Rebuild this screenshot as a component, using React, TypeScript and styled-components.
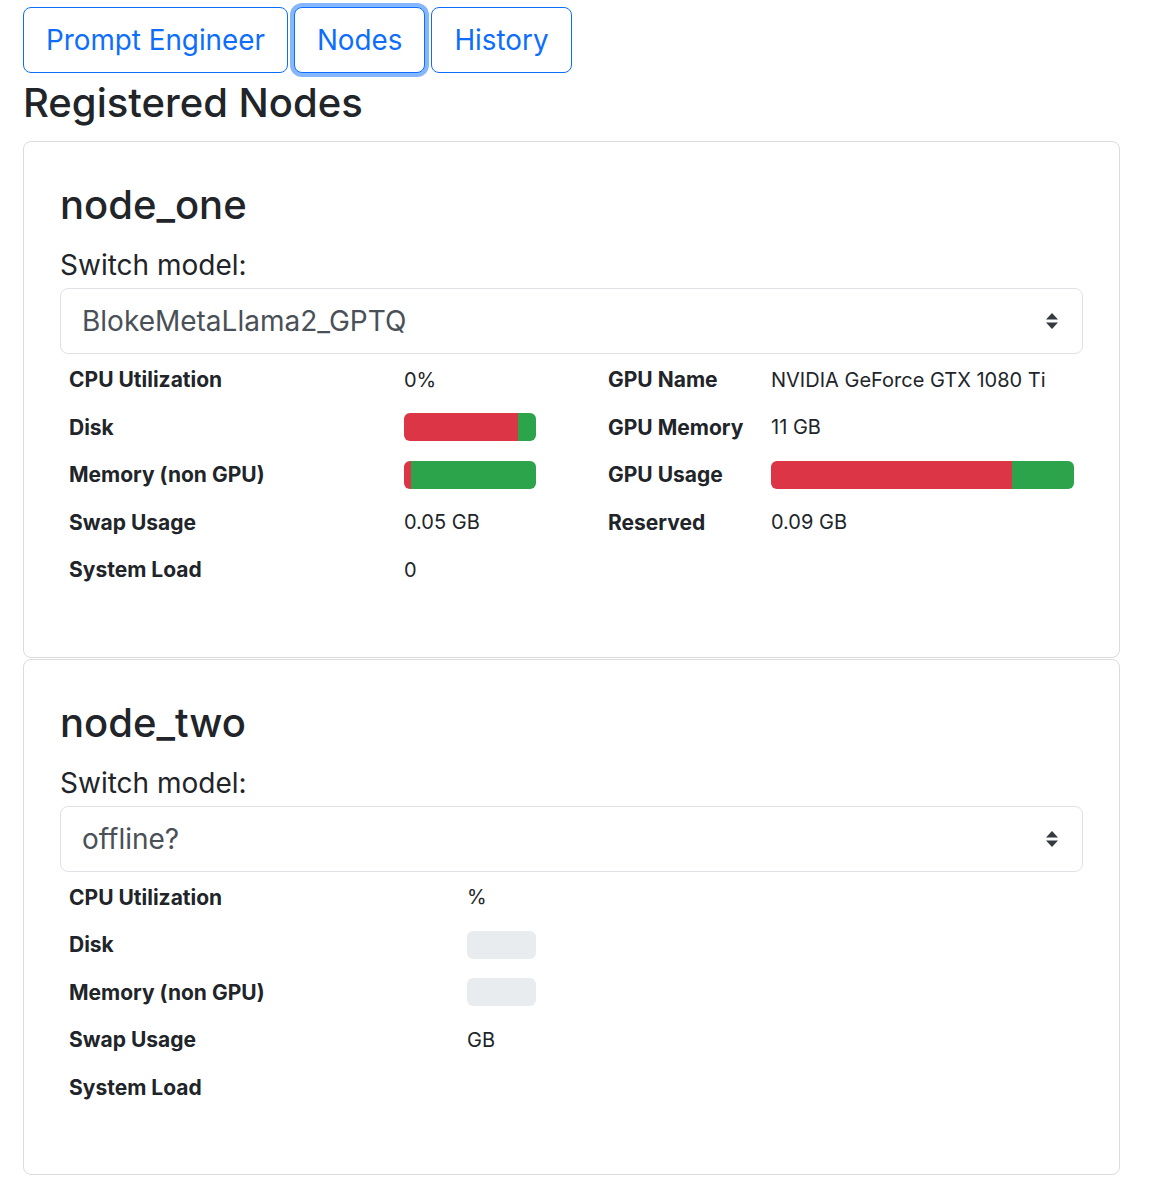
import React from 'react'
import styled, { createGlobalStyle } from 'styled-components'

const GlobalStyle = createGlobalStyle`
  body {
    margin: 0;
    background: #fff;
    font-family: Inter, 'Liberation Sans', Arial, sans-serif;
    color: #212529;
  }
`

type Bar = { used: number }
type Row = { label: string; value?: string; bar?: Bar | null }

type Node = {
  name: string
  model: string
  columns: string
  left: Row[]
  right: Row[]
}

const nodes: Node[] = [
  {
    name: 'node_one',
    model: 'BlokeMetaLlama2_GPTQ',
    columns: '335px 150px 54px 163px 1fr',
    left: [
      { label: 'CPU Utilization', value: '0%' },
      { label: 'Disk', bar: { used: 86 } },
      { label: 'Memory (non GPU)', bar: { used: 5 } },
      { label: 'Swap Usage', value: '0.05 GB' },
      { label: 'System Load', value: '0' },
    ],
    right: [
      { label: 'GPU Name', value: 'NVIDIA GeForce GTX 1080 Ti' },
      { label: 'GPU Memory', value: '11 GB' },
      { label: 'GPU Usage', bar: { used: 79.5 } },
      { label: 'Reserved', value: '0.09 GB' },
    ],
  },
  {
    name: 'node_two',
    model: 'offline?',
    columns: '398px 87px 1fr',
    left: [
      { label: 'CPU Utilization', value: '%' },
      { label: 'Disk', bar: null },
      { label: 'Memory (non GPU)', bar: null },
      { label: 'Swap Usage', value: 'GB' },
      { label: 'System Load', value: '' },
    ],
    right: [],
  },
]

const tabs = ['Prompt Engineer', 'Nodes', 'History']

const SelectArrows = () => (
  <svg width='14' height='18' viewBox='0 0 14 18'>
    <path d='M7 1 L13 7.5 H1 Z' fill='#343a40' />
    <path d='M7 17 L13 10.5 H1 Z' fill='#343a40' />
  </svg>
)

const Cell = ({ row, label }: { row?: Row; label?: boolean }) => {
  if (!row) return <Td />
  if (label) return <Th>{row.label}</Th>
  if (row.bar !== undefined) {
    return (
      <Td>
        <Progress>
          {row.bar && (
            <>
              <Fill $color='#dc3545' style={{ width: `${row.bar.used}%` }} />
              <Fill $color='#2ba44b' style={{ flex: 1 }} />
            </>
          )}
        </Progress>
      </Td>
    )
  }
  return <Td>{row.value}</Td>
}

const NodeCard = ({ node }: { node: Node }) => (
  <Card>
    <NodeName>{node.name}</NodeName>
    <Label>Switch model:</Label>
    <Select>
      <span>{node.model}</span>
      <SelectArrows />
    </Select>
    <Table $columns={node.columns}>
      {node.left.map((row, i) => (
        <React.Fragment key={row.label}>
          <Cell row={row} label />
          <Cell row={row} />
          <Td />
          {node.right.length > 0 && (
            <>
              <Cell row={node.right[i]} label />
              <Cell row={node.right[i]} />
            </>
          )}
        </React.Fragment>
      ))}
    </Table>
  </Card>
)

const App = () => {
  return (
    <Page>
      <GlobalStyle />
      <Tabs>
        {tabs.map((t) => (
          <TabButton key={t} $active={t === 'Nodes'}>
            {t}
          </TabButton>
        ))}
      </Tabs>
      <Title>Registered Nodes</Title>
      <Cards>
        {nodes.map((n) => (
          <NodeCard key={n.name} node={n} />
        ))}
      </Cards>
    </Page>
  )
}

export default App

const Page = styled.div`
  padding: 7px 48px 26px 23px;
`
const Tabs = styled.div`
  display: flex;
  gap: 6px;
`
const TabButton = styled.button<{ $active?: boolean }>`
  height: 66px;
  padding: 0 22px;
  font-family: inherit;
  font-size: 27.8px;
  color: #0d6efd;
  background: #fff;
  border: 1px solid #0d6efd;
  border-radius: 8px;
  box-shadow: ${(p) => (p.$active ? '0 0 0 4px #86b7fe' : 'none')};
`
const Title = styled.h1`
  margin: 6px 0 14px;
  font-size: 40px;
  font-weight: 500;
  line-height: 48px;
`
const Cards = styled.div`
  display: flex;
  flex-direction: column;
  gap: 1px;
`
const Card = styled.div`
  border: 1px solid #dcdcdc;
  border-radius: 8px;
  padding: 39px 36px 36px;
`
const NodeName = styled.h2`
  margin: 0 0 15px;
  font-size: 40px;
  font-weight: 500;
  line-height: 48px;
`
const Label = styled.div`
  font-size: 28px;
  line-height: 42px;
  margin-bottom: 2px;
`
const Select = styled.div`
  height: 66px;
  box-sizing: border-box;
  border: 1px solid #dee2e6;
  border-radius: 8px;
  padding: 0 23px 0 21px;
  display: flex;
  align-items: center;
  justify-content: space-between;
  font-size: 28px;
  color: #495057;
`
const Table = styled.div<{ $columns: string }>`
  display: grid;
  grid-template-columns: ${(p) => p.$columns};
  grid-auto-rows: 47.5px;
  padding-top: 2px;
  margin-bottom: 27px;
`
const Th = styled.div`
  display: flex;
  align-items: center;
  padding: 0 9px;
  font-size: 21px;
  font-weight: 700;
  white-space: nowrap;
`
const Td = styled.div`
  display: flex;
  align-items: center;
  padding: 0 9px;
  font-size: 20px;
  white-space: nowrap;
`
const Progress = styled.div`
  display: flex;
  width: 100%;
  height: 28px;
  border-radius: 6px;
  overflow: hidden;
  background: #e9ecef;
`
const Fill = styled.div<{ $color: string }>`
  background: ${(p) => p.$color};
  height: 100%;
`
